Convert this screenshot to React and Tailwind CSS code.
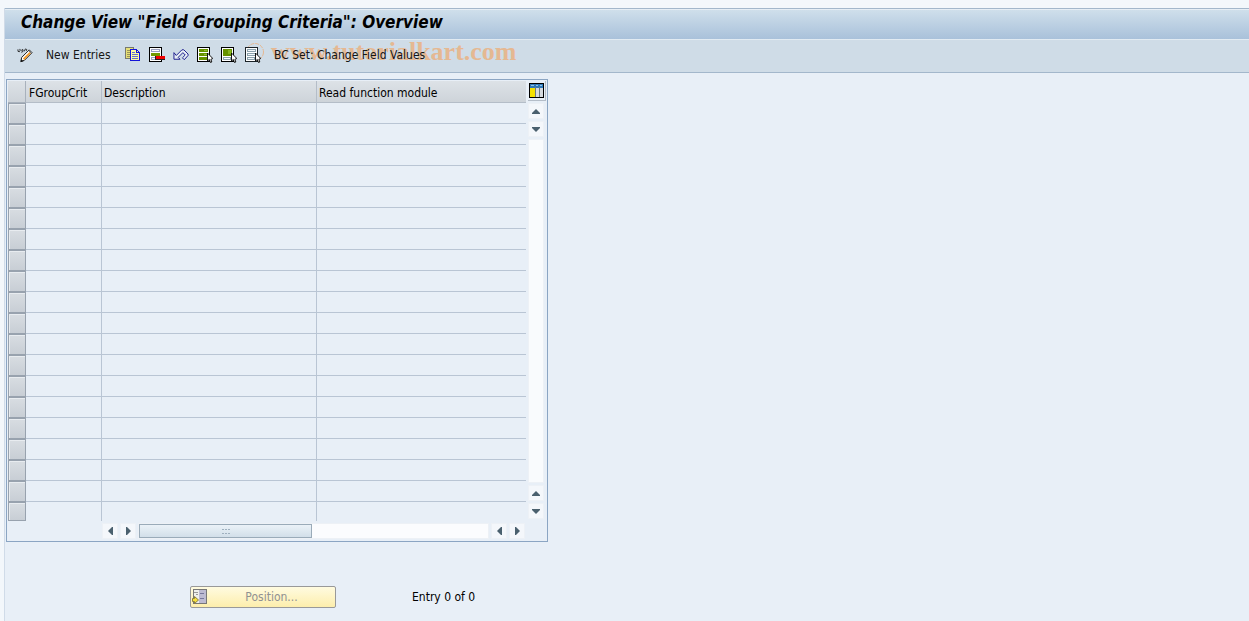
import React from "react";

const rows = Array.from({ length: 20 }, (_, i) => i);

function Icon({ children, w = 16, h = 16 }) {
  return (
    <svg width={w} height={h} viewBox={`0 0 ${w} ${h}`} aria-hidden="true" className="block shrink-0" shapeRendering="crispEdges">
      {children}
    </svg>
  );
}

const Cursor = () => (
  <path d="M10.5 6V14L12.300 12.500L13.500 15.500L14.800 15L13.900 12.300L15.800 11.500Z" fill="#fff" stroke="#000" strokeWidth="0.9" shapeRendering="auto" />
);

function EditIcon() {
  return (
    <svg width="17" height="17" viewBox="0 0 17 17" aria-hidden="true" className="block" fill="none">
      <path d="M1 2Q0.500 5 2.500 4.500Q4 3 3 1.500M4.500 5Q7 5 6.500 2.500Q5 1.500 5 3.500M8 4Q8 1.500 9.500 1.500Q11 2 10 3.500" stroke="#222" />
      <path d="M4 15L5 10.500L13 2.500L16 5.500L8 13.500Z" fill="#fff" stroke="#111" />
      <path d="M7 12.500L14 5.500" stroke="#f39a2b" strokeWidth="2" />
      <path d="M12.500 3.500L15 6" stroke="#707070" />
      <path d="M4 15.500L4.500 12.500L7 14.500Z" fill="#111" />
    </svg>
  );
}

function CopyIcon() {
  return (
    <Icon>
      <path d="M0.500 0.500H8.500V11.500H0.500Z" fill="#e6df76" stroke="#777a70" />
      <path d="M2 3.500H5M2 5.500H5M2 7.500H5M2 9.500H5" stroke="#99935a" />
      <path d="M5.500 2.500H11.500L14.500 5.500V13.500H5.500Z" fill="#fdf9a0" stroke="#1515d8" />
      <path d="M11.500 2.500V5.500H14.500" stroke="#1515d8" fill="none" />
      <path d="M7 5.500H10M7 7.500H13M7 9.500H13M7 11.500H13" stroke="#6470d2" />
    </Icon>
  );
}

function DeleteIcon() {
  return (
    <Icon>
      <path d="M0.500 0.500H12.500V14.500H0.500Z" fill="#fff" stroke="#000" />
      <path d="M2.500 2.500H10.500V4.500H2.500ZM2.500 10.500H10.500V12.500H2.500Z" fill="#fff" stroke="#9aa0c0" />
      <path d="M2 6H11V9H2Z" fill="#719900" />
      <path d="M6 9H16V13H6Z" fill="#222" />
      <path d="M7 9H16V12H7Z" fill="#f00000" />
    </Icon>
  );
}

function UndoIcon() {
  return (
    <svg width="17" height="16" viewBox="0 0 17 16" aria-hidden="true" className="block">
      <path d="M1 5.500V12.500H7.500L5.500 10.500L10.500 5.500L13 8L10 11L12 13L16 8.500V7L11.500 2.500H9.500L3.500 8.500Z" fill="#e9eff5" stroke="#15158a" />
    </svg>
  );
}

function SelectAllIcon() {
  return (
    <Icon>
      <path d="M0.500 0.500H12.500V14.500H0.500Z" fill="#fff" stroke="#000" />
      <path d="M2 2H11V5H2ZM2 6H11V9H2ZM2 10H10V13H2Z" fill="#669200" />
      <path d="M7 3H10V4H7ZM7 7H10V8H7Z" fill="#91bf35" />
      <Cursor />
    </Icon>
  );
}

function SelectBlockIcon() {
  return (
    <Icon>
      <path d="M0.500 0.500H12.500V14.500H0.500Z" fill="#fff" stroke="#000" />
      <path d="M2 2H11V9H2Z" fill="#669200" />
      <path d="M7 3H10V7H7Z" fill="#86b51e" />
      <path d="M2.500 10.500H9.500V12.500H2.500Z" fill="#fff" stroke="#8ba2ad" />
      <Cursor />
    </Icon>
  );
}

function DeselectIcon() {
  return (
    <Icon>
      <path d="M0.500 0.500H12.500V14.500H0.500Z" fill="#fff" stroke="#1c2429" />
      <path d="M2.500 2.500H10.500V4.500H2.500ZM2.500 6.500H10.500V8.500H2.500ZM2.500 10.500H9.500V12.500H2.500Z" fill="#f5f9fc" stroke="#8ba2ad" />
      <Cursor />
    </Icon>
  );
}

function SettingsIcon() {
  return (
    <Icon>
      <path d="M0.500 0.500H14.500V14.500H0.500Z" fill="#fff" stroke="#000" />
      <path d="M1 1H14V5H1Z" fill="#2f78b8" />
      <path d="M2 2H5V3H2ZM7 2H9V3H7ZM11 2H13V3H11Z" fill="#8fc3e8" />
      <path d="M1 5H6V14H1Z" fill="#f5e100" />
      <path d="M7 5H10V14H7ZM11 5H14V14H11Z" fill="#d6dade" />
      <path d="M6.500 4V14M10.500 4V14" stroke="#6b7882" />
    </Icon>
  );
}

function PositionIcon() {
  return (
    <Icon>
      <path d="M1.500 0.500H14.500V14.500H1.500Z" fill="#efefec" stroke="#777" />
      <path d="M7 1H14V14H7Z" fill="#bdbbd2" />
      <path d="M8 4.500H12M8 9.500H12" stroke="#77779b" />
      <path d="M2 3.500H6M4 5.500H6" stroke="#999" />
      <path d="M0.500 9.500H2.500V7.500L6.500 11L2.500 14.500V12.500H0.500Z" fill="#f7df3d" stroke="#8c8140" shapeRendering="auto" />
    </Icon>
  );
}

const arrows = {
  up: "M4 0L8 4V5H0V4Z",
  down: "M0 0H8V1L4 5L0 1Z",
  left: "M5 0V8H4L0 4L4 0Z",
  right: "M0 0H1L5 4L1 8H0Z",
};

function ScrollButton({ dir, label }) {
  const vertical = dir === "up" || dir === "down";
  return (
    <button type="button" aria-label={label} className="flex size-4 shrink-0 items-center justify-center border border-[#edf1f6] bg-[#f4f7fb]">
      <svg width={vertical ? 8 : 5} height={vertical ? 5 : 8} aria-hidden="true">
        <path d={arrows[dir]} fill="#4a606e" />
      </svg>
    </button>
  );
}

function ToolButton({ label, children }) {
  return (
    <button type="button" aria-label={label} title={label} className="flex w-4 justify-center">
      {children}
    </button>
  );
}

function Watermark() {
  return (
    <div aria-hidden="true" className="pointer-events-none absolute top-0 left-60 flex items-center gap-1.5 text-[#e5b892]">
      <svg width="20" height="20" viewBox="0 0 20 20" fill="none" stroke="currentColor" className="shrink-0">
        <circle cx="10" cy="10" r="8.500" strokeDasharray="4 1" />
      </svg>
      <span className="font-['Liberation_Serif',serif] text-[26px] leading-6 font-bold">www.tutorialkart.com</span>
    </div>
  );
}

export default function App() {
  return (
    <div className="min-h-screen bg-[#f3f7fb] pt-2 pl-1 font-['DejaVu_Sans_Condensed','DejaVu_Sans',sans-serif] text-xs text-black">
      <div className="min-h-[613px] border-l border-[#d0dbe8] bg-[#e8eff7]">
        <header className="border-y border-[#a3b7cb] bg-[#cfdce7]">
          <h1 className="h-[30px] border-t border-[#e6eef5] bg-linear-to-b from-[#cfdfeb] to-[#a9c1da] pl-4 text-[17px] leading-[25px] font-bold italic">
            Change View "Field Grouping Criteria": Overview
          </h1>
          <div className="relative h-[33px] border-t border-[#e2ebf2] text-[#151515]">
            <Watermark />
            <div className="relative flex h-[30px] items-center pl-3">
              <ToolButton label="Display/Change"><EditIcon /></ToolButton>
              <button type="button" className="ml-3 w-[68px] pl-px text-left whitespace-nowrap">New Entries</button>
              <div className="ml-3 flex items-center gap-2">
                <ToolButton label="Copy as"><CopyIcon /></ToolButton>
                <ToolButton label="Delete"><DeleteIcon /></ToolButton>
                <ToolButton label="Undo change"><UndoIcon /></ToolButton>
                <ToolButton label="Select all"><SelectAllIcon /></ToolButton>
                <ToolButton label="Select block"><SelectBlockIcon /></ToolButton>
                <ToolButton label="Deselect all"><DeselectIcon /></ToolButton>
              </div>
              <button type="button" className="ml-3 pl-px whitespace-nowrap">BC Set: Change Field Values</button>
            </div>
          </div>
        </header>

        <main className="pt-1.5 pl-px">
          <section className="w-[542px] border border-[#8ba5c3] pt-px pb-0.5 pl-px">
            <div className="flex">
              <table className="w-[518px] table-fixed border-separate border-spacing-0">
                <colgroup>
                  <col className="w-[18px]" />
                  <col className="w-[76px]" />
                  <col className="w-[215px]" />
                  <col />
                </colgroup>
                <thead>
                  <tr className="h-[22px] bg-linear-to-b from-[#dde2e7] to-[#cdd3d9] text-left">
                    <th aria-label="Row selection" className="border-r border-b border-[#a8b1bc] p-0" />
                    <th className="border-r border-b border-[#b4bdc8] p-0 pt-0.5 pl-[3px] font-normal">FGroupCrit</th>
                    <th className="border-r border-b border-[#b4bdc8] p-0 pt-0.5 pl-0.5 font-normal">Description</th>
                    <th className="border-b border-[#b4bdc8] p-0 pt-0.5 pl-0.5 font-normal">Read function module</th>
                  </tr>
                </thead>
                <tbody>
                  {rows.map((row) => (
                    <tr key={row} className="group h-[21px] last:h-[19px]">
                      <td className="p-0">
                        <button type="button" aria-label={`Select row ${row + 1}`} className="block h-[21px] w-[18px] border border-[#98a2ae] bg-linear-to-b from-[#d8dde2] to-[#c8ced5] shadow-[inset_1px_1px_0_#e8ecf0] group-last:h-[19px]" />
                      </td>
                      <td className="border-r border-b border-[#b9c5d4] p-0 group-last:border-b-0" />
                      <td className="border-r border-b border-[#b9c5d4] p-0 group-last:border-b-0" />
                      <td className="border-b border-[#b9c5d4] p-0 group-last:border-b-0" />
                    </tr>
                  ))}
                </tbody>
              </table>
              <div className="ml-0.5 flex flex-1 flex-col gap-0.5 pb-0.5">
                <button type="button" aria-label="Table settings" className="flex h-5 w-[18px] items-center border-r border-b border-[#b4bdc8] pl-px"><SettingsIcon /></button>
                <ScrollButton dir="up" label="Scroll up" />
                <ScrollButton dir="down" label="Page down" />
                <div className="w-4 flex-1 border border-[#edf1f6] bg-[#f9fbfd]" />
                <ScrollButton dir="up" label="Page up" />
                <ScrollButton dir="down" label="Scroll down" />
              </div>
            </div>
            <div className="mt-0.5 flex gap-0.5 pr-[22px] pl-[94px]">
              <ScrollButton dir="left" label="Scroll left" />
              <ScrollButton dir="right" label="Page right" />
              <div className="flex h-4 flex-1 border border-[#edf1f6] bg-[#fbfcfe]">
                <button type="button" aria-label="Horizontal scroll position" className="flex w-[173px] items-center justify-center border border-[#9aabb9] bg-linear-to-b from-[#ebf2f8] to-[#d2dfe9]">
                  <Icon w={8} h={5}>
                    <path d="M0 0.500H2M3 0.500H5M6 0.500H8M0 4.500H2M3 4.500H5M6 4.500H8" stroke="#9fb0bf" />
                  </Icon>
                </button>
              </div>
              <ScrollButton dir="left" label="Page left" />
              <ScrollButton dir="right" label="Scroll right" />
            </div>
          </section>

          <footer className="mt-11 flex items-center pl-[184px]">
            <button type="button" disabled className="flex h-[22px] w-[146px] items-center rounded-xs border border-[#999] bg-linear-to-b from-[#fffbe0] to-[#fdeeac] pl-px text-[#919191]">
              <PositionIcon />
              <span className="flex-1 text-center">Position...</span>
            </button>
            <output className="ml-[76px]">Entry 0 of 0</output>
          </footer>
        </main>
      </div>
    </div>
  );
}
